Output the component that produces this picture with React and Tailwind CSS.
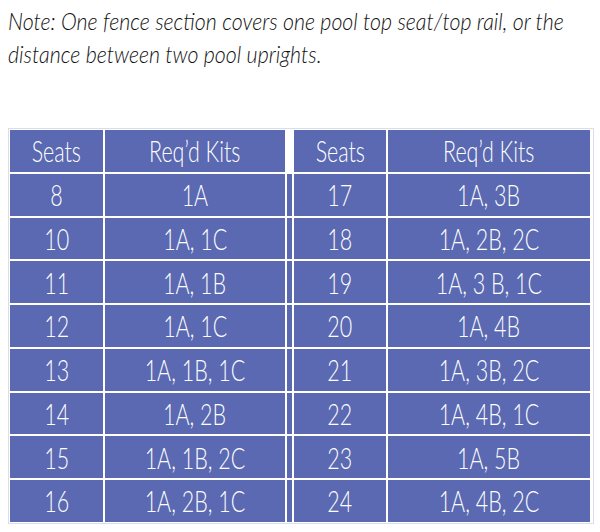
const left = [
  ['8', '1A'],
  ['10', '1A, 1C'],
  ['11', '1A, 1B'],
  ['12', '1A, 1C'],
  ['13', '1A, 1B, 1C'],
  ['14', '1A, 2B'],
  ['15', '1A, 1B, 2C'],
  ['16', '1A, 2B, 1C'],
]

const right = [
  ['17', '1A, 3B'],
  ['18', '1A, 2B, 2C'],
  ['19', '1A, 3 B, 1C'],
  ['20', '1A, 4B'],
  ['21', '1A, 3B, 2C'],
  ['22', '1A, 4B, 1C'],
  ['23', '1A, 5B'],
  ['24', '1A, 4B, 2C'],
]

function Cell({ children }) {
  return (
    <div className="flex items-center justify-center bg-[#5a69b1] text-white overflow-hidden">
      <span className="inline-block whitespace-nowrap scale-x-[0.74] text-[29px] font-light leading-none">
        {children}
      </span>
    </div>
  )
}

export default function App() {
  const rows = left.map((l, i) => [l, right[i]])
  return (
    <div className="w-[600px] h-[532px] bg-white font-['Lato','Liberation_Sans',sans-serif] overflow-hidden">
      <div className="pl-[8px] pt-[5px] text-[23px] italic font-light text-[#111] leading-[33px]">
        <div className="whitespace-nowrap origin-left scale-x-[0.93]">
          Note: One fence section covers one pool top seat/top rail, or the
        </div>
        <div className="whitespace-nowrap origin-left scale-x-[0.93]">
          distance between two pool uprights.
        </div>
      </div>

      <div className="mt-[57px] ml-[8px] w-[586px] border border-[#d9deee] p-[1px]">
        <div className="grid grid-cols-[93px_180px_5px_92px_202px] auto-rows-[41.75px] gap-[2px] bg-white">
          <Cell>Seats</Cell>
          <Cell>Req’d Kits</Cell>
          <div className="bg-white" />
          <Cell>Seats</Cell>
          <Cell>Req’d Kits</Cell>
          {rows.map(([l, r]) => [
            <Cell key={l[0] + 'a'}>{l[0]}</Cell>,
            <Cell key={l[0] + 'b'}>{l[1]}</Cell>,
            <div key={l[0] + 'g'} className="bg-[#5a69b1]" />,
            <Cell key={r[0] + 'a'}>{r[0]}</Cell>,
            <Cell key={r[0] + 'b'}>{r[1]}</Cell>,
          ])}
        </div>
      </div>
    </div>
  )
}
